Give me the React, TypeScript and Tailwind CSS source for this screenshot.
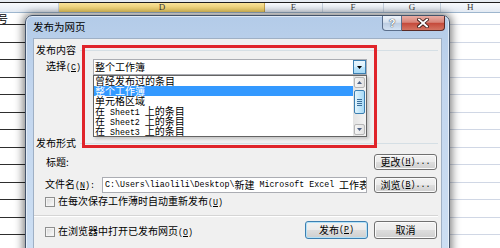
import React from "react";

// half-width latin run, like SimSun's ascii glyphs
const M = ({ children }: { children: React.ReactNode }) => (
  <span className="font-['Liberation_Mono',monospace] text-[8.3px] leading-[10px]">{children}</span>
);

const Btn = ({ children, def, tall }: { children: React.ReactNode; def?: boolean; tall?: boolean }) => (
  <div
    className={
      "flex w-[63px] items-center justify-center rounded-[3px] border bg-[linear-gradient(#f2f2f2_0%,#ebebeb_48%,#dddddd_52%,#cfcfcf_100%)] text-[10px] leading-[10px] " +
      (tall ? "h-[18px] " : "h-[16px] ") +
      (def ? "border-[#3c7fb1] shadow-[inset_0_0_0_1px_#b4e2f8]" : "border-[#707070] shadow-[inset_0_0_0_1px_#fbfbfb]")
    }
  >
    {children}
  </div>
);

const Check = () => (
  <div className="h-[10px] w-[10px] shrink-0 border border-[#8e8f8f] bg-[linear-gradient(135deg,#d6d6d6,#fdfdfd)] shadow-[inset_0_0_0_1px_#f4f4f4]" />
);

const Group = ({ label }: { label: string }) => (
  <div className="flex h-[10px] items-center">
    <span className="pl-[2px] text-[10px] leading-[10px]">{label}</span>
    <div className="ml-[4px] mr-[3px] h-px flex-1 bg-[#d5dfe5]" />
  </div>
);

const rows = [12, 18, 17, 18, 17, 18, 17, 18, 17, 18, 17, 18, 17, 18];

const Arrow = ({ up }: { up?: boolean }) => (
  <svg width="5" height="3" viewBox="0 0 5 3">
    <path d={up ? "M0 3 L2.5 0 L5 3 Z" : "M0 0 L2.5 3 L5 0 Z"} fill="#4d6185" />
  </svg>
);

export default function App() {
  return (
    <div className="relative h-[248px] w-[500px] overflow-hidden bg-white font-['Noto_Sans_CJK_SC',sans-serif] text-black">
      {/* spreadsheet behind */}
      <div className="flex flex-col">
        <div className="h-[2px] bg-[#e6ebf1]" />
        <div className="flex h-[11px] border-y border-t-[#1e1e1e] border-b-[#9eb6ce] bg-[linear-gradient(#f8fafd,#e3eaf3)] font-['Liberation_Serif',serif] text-[9px] leading-[9px] text-[#3a3a3a]">
          <div className="w-[60px] border-r border-[#c5d1de]" />
          <div className="flex w-[208px] items-center justify-center border-r border-[#c5a14a] bg-[linear-gradient(#f9e39a,#f1cf62)]">D</div>
          <div className="flex w-[58px] items-center justify-center border-r border-[#c5d1de]">E</div>
          <div className="flex w-[62px] items-center justify-center border-r border-[#c5d1de]">F</div>
          <div className="flex w-[57px] items-center justify-center border-r border-[#c5d1de]">G</div>
          <div className="flex w-[60px] items-center justify-center">H</div>
        </div>
        {rows.map((h, i) => (
          <div key={i} className={"flex " + (h === 12 ? "h-[12px]" : h === 18 ? "h-[18px]" : "h-[17px]")}>
            <div className="w-[60px] border-b border-[#2e2e2e] text-[10px] leading-[11px]">
              {i === 0 ? <span className="-ml-[2px]">号</span> : null}
            </div>
            <div className="flex-1 border-b border-[#d0d7e5]" />
          </div>
        ))}
      </div>

      {/* dialog window */}
      <div className="absolute left-[25px] top-[15px] flex h-[250px] w-[425px] flex-col rounded-t-[7px] border border-[#44546a] bg-[linear-gradient(#b3cbe8,#c3d6ee_30%,#cddff3)] shadow-[0_0_9px_2px_rgba(0,0,0,0.5),inset_0_0_0_1px_rgba(255,255,255,0.55)]">
        <div className="flex h-[22px] items-start justify-between">
          <div className="flex h-[21px] items-center pl-[7px] text-[10.5px] leading-[11px]">发布为网页</div>
          <div className="mr-[4px] flex">
            <div className="flex h-[15px] w-[20px] items-center justify-center rounded-bl-[4px] border border-t-0 border-[#5b6f8c] bg-[linear-gradient(#eef3f9,#d6e1ee_45%,#bccde2_52%,#d4e2f2)] font-['Liberation_Sans',sans-serif] text-[11px] font-bold leading-[11px] text-white [text-shadow:0_0_1px_#2d3c52,0_0_1px_#2d3c52]">
              ?
            </div>
            <div className="flex h-[15px] w-[43px] items-center justify-center rounded-br-[4px] border border-l-0 border-t-0 border-[#5a2a26] bg-[linear-gradient(#eaaea4,#d88479_45%,#c54a3b_52%,#d47462)]">
              <svg width="12" height="10" viewBox="0 0 12 10">
                <path d="M2 1.5 L10 8.5 M10 1.5 L2 8.5" stroke="#3b1c18" strokeWidth="3.6" strokeLinecap="square" />
                <path d="M2 1.5 L10 8.5 M10 1.5 L2 8.5" stroke="#ffffff" strokeWidth="1.9" strokeLinecap="square" />
              </svg>
            </div>
          </div>
        </div>

        <div className="relative mx-[7px] flex-1 border border-[#9fb0c5] bg-[#f0f0f0]">
          <div className="mt-[6px]">
            <Group label="发布内容" />
          </div>

          <div className="mt-[4px] flex h-[16px] items-center">
            <span className="ml-[12px] w-[47px] text-[10px] leading-[10px]">
              选择<M>(<u>C</u>)</M>
            </span>
            <div className="relative flex h-[16px] w-[274px] border border-[#abadb3] bg-white">
              <div className="flex flex-1 items-center pl-[1px] text-[10px] leading-[10px]">整个工作簿</div>
              <div className="flex h-[14px] w-[13px] items-center justify-center border border-[#3c7fb1] bg-[linear-gradient(#eaf6fd,#d9f0fc_48%,#bee6fd_52%,#a7d9f5)]">
                <svg width="5" height="3" viewBox="0 0 5 3">
                  <path d="M0 0 L2.5 3 L5 0 Z" fill="#000" />
                </svg>
              </div>

              {/* open drop list */}
              <div className="absolute -left-px top-[15px] z-10 flex h-[62px] w-[274px] border border-[#646464] bg-white shadow-[2px_2px_3px_rgba(0,0,0,0.18)]">
                <div className="flex flex-1 flex-col text-[10px] leading-[10px]">
                  <div className="h-[10px] pl-[1px]">曾经发布过的条目</div>
                  <div className="h-[10px] bg-[#3399ff] pl-[1px] text-white">整个工作簿</div>
                  <div className="h-[10px] pl-[1px]">单元格区域</div>
                  <div className="h-[10px] whitespace-pre pl-[1px]">
                    在<M> Sheet1 </M>上的条目
                  </div>
                  <div className="h-[10px] whitespace-pre pl-[1px]">
                    在<M> Sheet2 </M>上的条目
                  </div>
                  <div className="h-[10px] whitespace-pre pl-[1px]">
                    在<M> Sheet3 </M>上的条目
                  </div>
                </div>
                <div className="flex w-[13px] flex-col bg-[linear-gradient(90deg,#e3e3e3,#f3f3f3)] px-[1px] pt-[1px] pb-[1px]">
                  <div className="flex h-[11px] items-center justify-center rounded-[2px] border border-[#b6b6b6] bg-[linear-gradient(90deg,#f6f6f6,#e2e2e2)]">
                    <Arrow up />
                  </div>
                  <div className="mt-[2px] flex h-[24px] flex-col items-center justify-center gap-[1px] rounded-[2px] border border-[#3c7fb1] bg-[linear-gradient(90deg,#e3f4fc,#c4e7fa_50%,#a9daf6)]">
                    <div className="h-px w-[5px] bg-[#3c6e9a]" />
                    <div className="h-px w-[5px] bg-[#3c6e9a]" />
                    <div className="h-px w-[5px] bg-[#3c6e9a]" />
                    <div className="h-px w-[5px] bg-[#3c6e9a]" />
                  </div>
                  <div className="flex-1" />
                  <div className="flex h-[11px] items-center justify-center rounded-[2px] border border-[#b6b6b6] bg-[linear-gradient(90deg,#f6f6f6,#e2e2e2)]">
                    <Arrow />
                  </div>
                </div>
              </div>
            </div>
          </div>

          <div className="mt-[63px]">
            <Group label="发布形式" />
          </div>

          <div className="mt-[6px] flex h-[16px] items-center justify-between pr-[4px]">
            <span className="ml-[12px] text-[10px] leading-[10px]">标题:</span>
            <Btn>
              更改<M>(<u>H</u>)...</M>
            </Btn>
          </div>

          <div className="mt-[7px] flex h-[16px] items-center">
            <span className="ml-[11px] w-[57px] text-[10px] leading-[10px]">
              文件名<M>(<u>N</u>):</M>
            </span>
            <div className="flex h-[16px] w-[265px] items-center overflow-hidden whitespace-pre border border-[#abadb3] bg-white pl-[2px] text-[10px] leading-[10px]">
              <M>{"C:\\Users\\liaolili\\Desktop\\"}</M>新建<M> Microsoft Excel </M>工作表
            </div>
            <div className="ml-[7px]">
              <Btn>
                浏览<M>(<u>B</u>)...</M>
              </Btn>
            </div>
          </div>

          <div className="mt-[3px] flex h-[11px] items-center">
            <div className="ml-[11px]">
              <Check />
            </div>
            <span className="ml-[3px] text-[10px] leading-[10px]">
              在每次保存工作薄时自动重新发布<M>(<u>U</u>)</M>
            </span>
          </div>

          <div className="mr-[3px] mt-[8px] h-[2px] border-t border-b border-t-[#d5d5d5] border-b-white" />

          <div className="mt-[4px] flex h-[18px] items-center pr-[4px]">
            <div className="ml-[11px] mt-[3px]">
              <Check />
            </div>
            <span className="ml-[3px] mt-[3px] flex-1 text-[10px] leading-[10px]">
              在浏览器中打开已发布网页<M>(<u>O</u>)</M>
            </span>
            <Btn def tall>
              发布<M>(<u>P</u>)</M>
            </Btn>
            <div className="ml-[6px]">
              <Btn tall>取消</Btn>
            </div>
          </div>

          {/* red highlight annotation */}
          <div className="pointer-events-none absolute left-[48px] top-[6px] z-20 h-[103px] w-[295px] border-[3px] border-[#e0242a]" />
        </div>
      </div>
    </div>
  );
}
